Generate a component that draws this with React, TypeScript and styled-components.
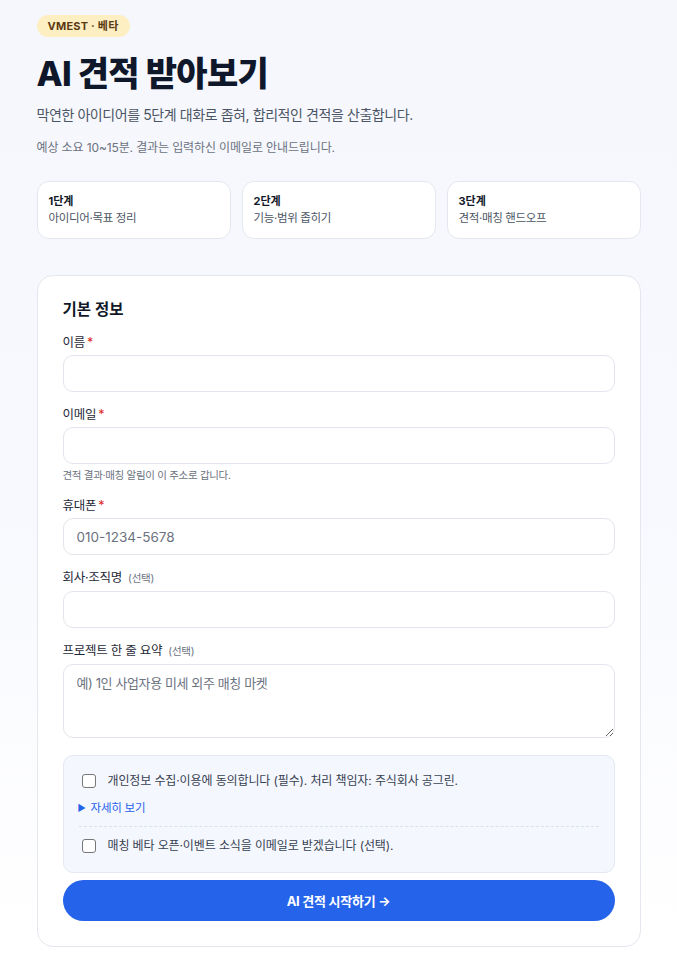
import React from 'react'
import styled, { createGlobalStyle } from 'styled-components'

const GlobalStyle = createGlobalStyle`
    * { box-sizing: border-box; }
    html, body {
        margin: 0;
        padding: 0;
        background: linear-gradient(180deg, #f5f7fd 0%, #f8f9fe 55%, #ffffff 100%);
        font-family: Inter, "Noto Sans CJK KR", sans-serif;
        color: #111827;
    }
`

const Page = styled.main`
    width: 604px;
    margin: 0 auto;
    padding: 14px 0 10px;
`

const Badge = styled.span`
    display: inline-block;
    height: 22px;
    line-height: 22px;
    padding: 0 11px;
    border-radius: 999px;
    background: #fdefc2;
    color: #5b3a12;
    font-size: 11px;
    font-weight: 700;
    letter-spacing: 0.02em;
`

const Title = styled.h1`
    margin: 13px 0 0;
    font-size: 34px;
    line-height: 48px;
    font-weight: 800;
    letter-spacing: -0.02em;
    color: #0f172a;
`

const Lead = styled.p`
    margin: 7px 0 0;
    font-size: 14px;
    line-height: 20px;
    color: #4b5563;
    letter-spacing: -0.03em;
`

const Note = styled.p`
    margin: 14px 0 0;
    font-size: 12px;
    line-height: 18px;
    color: #6b7280;
    letter-spacing: -0.01em;
`

const Steps = styled.div`
    display: grid;
    grid-template-columns: repeat(3, 1fr);
    gap: 11px;
    margin-top: 24px;
`

const StepCard = styled.div`
    height: 58px;
    padding: 11px 11px;
    background: #ffffff;
    border: 1px solid #e4e7ee;
    border-radius: 12px;
`

const StepNum = styled.div`
    font-size: 11px;
    line-height: 16px;
    font-weight: 700;
    color: #111827;
`

const StepText = styled.div`
    font-size: 11.5px;
    line-height: 18px;
    color: #4b5563;
    letter-spacing: -0.03em;
`

const FormCard = styled.section`
    margin-top: 36px;
    padding: 22px 25px 25px;
    background: #ffffff;
    border: 1px solid #e4e7ee;
    border-radius: 16px;
`

const SectionTitle = styled.h2`
    margin: 0 0 6px;
    font-size: 15.5px;
    line-height: 24px;
    font-weight: 600;
    color: #111827;
`

const Field = styled.div`
    margin-top: 14px;
    &:first-of-type { margin-top: 12px; }
`

const Label = styled.label`
    display: block;
    font-size: 12.5px;
    line-height: 18px;
    color: #1f2937;
    margin-bottom: 3px;
    letter-spacing: -0.02em;
`

const Req = styled.span`
    color: #dc2626;
    margin-left: 2px;
`

const Opt = styled.span`
    color: #6b7280;
    font-size: 10.5px;
    margin-left: 6px;
`

const Input = styled.input`
    display: block;
    width: 100%;
    height: 37px;
    padding: 0 13px;
    border: 1px solid #e2e5ec;
    border-radius: 10px;
    background: #ffffff;
    font-family: inherit;
    font-size: 13.5px;
    color: #111827;
    outline: none;
    &::placeholder { color: #6b7280; }
`

const TextArea = styled.textarea`
    display: block;
    width: 100%;
    height: 74px;
    padding: 8px 13px;
    border: 1px solid #e2e5ec;
    border-radius: 10px;
    background: #ffffff;
    font-family: inherit;
    font-size: 13px;
    line-height: 20px;
    color: #111827;
    outline: none;
    resize: vertical;
    &::placeholder { color: #6b7280; letter-spacing: -0.03em; }
`

const Hint = styled.div`
    margin-top: 5px;
    font-size: 10.5px;
    line-height: 14px;
    color: #6b7280;
    letter-spacing: -0.03em;
`

const ConsentBox = styled.div`
    margin-top: 17px;
    padding: 12px 12px 13px;
    background: #f4f7fe;
    border: 1px solid #e3e8f3;
    border-radius: 10px;
`

const CheckRow = styled.label`
    display: flex;
    align-items: center;
    gap: 12px;
    padding: 4px 6px;
    font-size: 12px;
    line-height: 18px;
    color: #374151;
    letter-spacing: -0.01em;
`

const Check = styled.input.attrs({ type: 'checkbox' })`
    appearance: none;
    margin: 0;
    width: 14px;
    height: 14px;
    border: 1px solid #767676;
    border-radius: 3px;
    background: #ffffff;
    flex: none;
`

const More = styled.div`
    margin: 6px 0 10px 2px;
    font-size: 11.5px;
    line-height: 16px;
    color: #2563eb;
    letter-spacing: -0.02em;
    &::before {
        content: '▶';
        font-size: 9px;
        margin-right: 5px;
        vertical-align: 1px;
    }
`

const Divider = styled.hr`
    margin: 0 3px 6px;
    border: 0;
    border-top: 1px dashed #dbe1ec;
`

const Submit = styled.button`
    display: block;
    width: 100%;
    height: 41px;
    margin-top: 7px;
    border: 0;
    border-radius: 999px;
    background: #2563eb;
    color: #ffffff;
    font-family: inherit;
    font-size: 13px;
    font-weight: 700;
    letter-spacing: -0.02em;
`

const steps = [
    { num: '1단계', text: '아이디어·목표 정리' },
    { num: '2단계', text: '기능·범위 좁히기' },
    { num: '3단계', text: '견적·매칭 핸드오프' },
]

const App = () => {
    return (
        <>
            <GlobalStyle />
            <Page>
                <Badge>VMEST · 베타</Badge>
                <Title>AI 견적 받아보기</Title>
                <Lead>막연한 아이디어를 5단계 대화로 좁혀, 합리적인 견적을 산출합니다.</Lead>
                <Note>예상 소요 10~15분. 결과는 입력하신 이메일로 안내드립니다.</Note>

                <Steps>
                    {steps.map(s => (
                        <StepCard key={s.num}>
                            <StepNum>{s.num}</StepNum>
                            <StepText>{s.text}</StepText>
                        </StepCard>
                    ))}
                </Steps>

                <FormCard>
                    <SectionTitle>기본 정보</SectionTitle>

                    <Field>
                        <Label>이름<Req>*</Req></Label>
                        <Input />
                    </Field>

                    <Field>
                        <Label>이메일<Req>*</Req></Label>
                        <Input type="email" />
                        <Hint>견적 결과·매칭 알림이 이 주소로 갑니다.</Hint>
                    </Field>

                    <Field>
                        <Label>휴대폰<Req>*</Req></Label>
                        <Input placeholder="010-1234-5678" />
                    </Field>

                    <Field>
                        <Label>회사·조직명<Opt>(선택)</Opt></Label>
                        <Input />
                    </Field>

                    <Field>
                        <Label>프로젝트 한 줄 요약<Opt>(선택)</Opt></Label>
                        <TextArea placeholder="예) 1인 사업자용 미세 외주 매칭 마켓" />
                    </Field>

                    <ConsentBox>
                        <CheckRow>
                            <Check />
                            개인정보 수집·이용에 동의합니다 (필수). 처리 책임자: 주식회사 공그린.
                        </CheckRow>
                        <More>자세히 보기</More>
                        <Divider />
                        <CheckRow>
                            <Check />
                            매칭 베타 오픈·이벤트 소식을 이메일로 받겠습니다 (선택).
                        </CheckRow>
                    </ConsentBox>

                    <Submit>AI 견적 시작하기 →</Submit>
                </FormCard>
            </Page>
        </>
    )
}

export default App
